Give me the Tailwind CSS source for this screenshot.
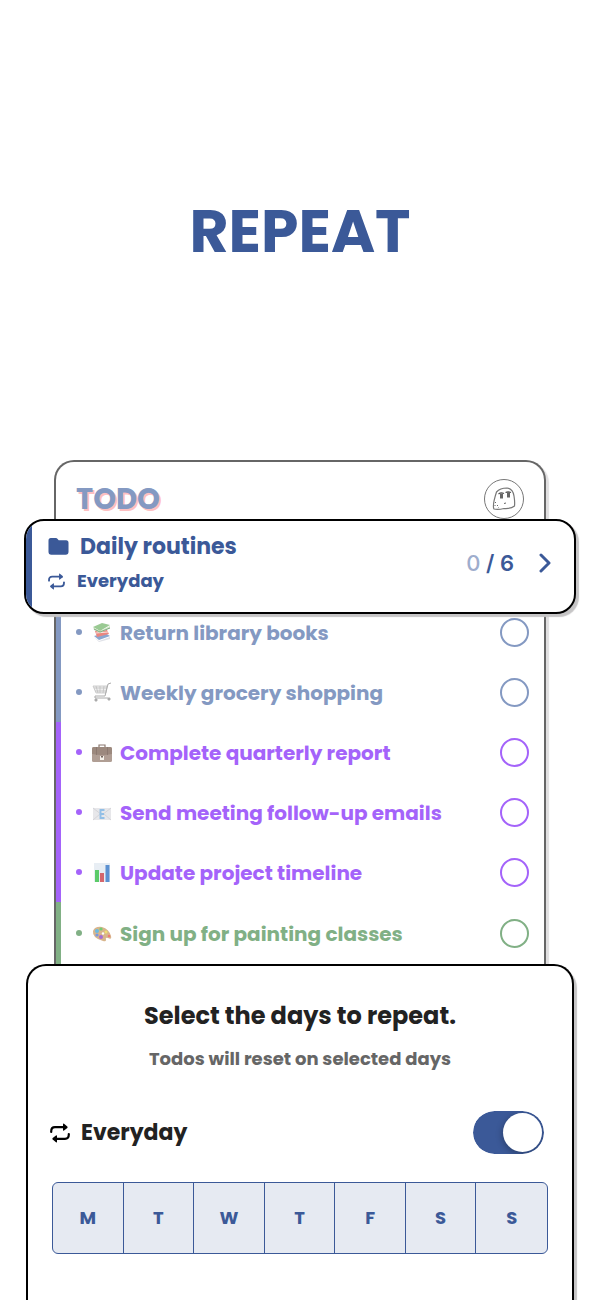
<!DOCTYPE html>
<html lang="en">
<head>
<meta charset="utf-8">
<meta name="viewport" content="width=device-width, initial-scale=1">
<title>Repeat</title>
<script src="https://cdn.jsdelivr.net/npm/@tailwindcss/browser@4"></script>
</head>
<body class="bg-white font-['Poppins','Inter',sans-serif] font-bold text-[#3b5998]">
<svg class="hidden" aria-hidden="true">
  <symbol id="repeat" viewBox="0 0 20 20">
    <g fill="none" stroke="currentColor" stroke-width="2.200" stroke-linecap="round" stroke-linejoin="round">
      <path d="M1.200 9V8.500Q1.200 4.200 5 4.200H15"/><path d="M18.800 11v.5Q18.800 15.800 15 15.800H5"/>
    </g>
    <path d="M13 1.300Q13 .2 14 .8L17.300 3.500Q18 4.200 17.300 4.900L14 7.600Q13 8.200 13 7.100Z" fill="currentColor"/>
    <path d="M7 12.900Q7 11.800 6 12.400L2.700 15.100Q2 15.800 2.700 16.500L6 19.200Q7 19.800 7 18.700Z" fill="currentColor"/>
  </symbol>
</svg>
<main class="flex min-h-screen flex-col overflow-hidden">
  <h1 class="mt-[201px] text-center text-[60px] leading-[60px]">REPEAT</h1>

  <section class="mx-[54px] mt-[199px] flex shrink-0 flex-col rounded-t-[20px] border-2 border-b-0 border-[#666] shadow-[3px_3px_1px_#e0dfe0]">
    <header class="flex h-[57px] shrink-0 items-center justify-between px-5 pt-4">
      <h2 class="text-[29px] leading-8 text-[#8499c2] [text-shadow:2px_2px_0_#fdbfc1]">TODO</h2>
      <button aria-label="Profile" class="size-10 shrink-0">
        <svg viewBox="0 0 40 40" class="size-10" fill="none" stroke="#777">
          <circle cx="20" cy="20" r="19.500"/>
          <path d="M12.500 13Q16 9 23 9Q29 10 30 17Q31 23 30.500 27Q27 30 20 29.500Q14 31 10 30Q8 27 12.500 13Z" stroke-width="1.200"/>
          <path d="M14.500 15Q17 13 20 14.500M21.500 13.500Q24 12.500 27 13.500" stroke="#555" stroke-width="1.300"/>
          <path d="M17.500 14.500v5M24.500 13.500v5" stroke="#666" stroke-width="3"/>
          <path d="M20 24.500l2-.5M12 23l-1 1M13 26l1 1M10.500 26l1 1M14 28l.5.5" stroke="#666"/>
        </svg>
      </button>
    </header>

    <article class="relative z-10 -mx-8 flex h-[95px] shrink-0 items-center justify-between overflow-hidden rounded-[20px] border-2 border-black bg-white pr-[22px] shadow-[3px_3px_1px_#c6c5c6]">
      <div class="flex h-full items-stretch">
        <span class="w-[6px] bg-[#3b5998]"></span>
        <div class="ml-4 flex flex-col gap-1 pt-[9px]">
          <h3 class="flex items-center gap-[11px] text-[22px] leading-[34px]">
            <svg viewBox="0 0 22 18" class="w-[21px]" fill="currentColor" aria-hidden="true"><path d="M3 0H8Q9.500 0 10.300 1.200L11.200 2.300H19Q21.500 2.300 21.500 5V14.500Q21.500 17.500 18.500 17.500H3.500Q.5 17.500 .5 14.500V3Q.5 0 3 0Z"/></svg>
            Daily routines
          </h3>
          <p class="flex items-center gap-3 text-lg leading-[26px]">
            <svg class="size-[17px]" aria-hidden="true"><use href="#repeat"/></svg>
            Everyday
          </p>
        </div>
      </div>
      <a href="#routines" aria-label="Open Daily routines, 0 of 6 done" class="mb-2 flex items-center gap-6 font-['Inter',sans-serif] text-[22px] leading-8 font-semibold">
        <span class="whitespace-pre"><span class="font-medium text-[#9eadcd]">0</span> / 6</span>
        <svg viewBox="0 0 14 20" class="h-5 w-[14px]" fill="none" stroke="currentColor" stroke-width="3" stroke-linecap="round" stroke-linejoin="round" aria-hidden="true"><path d="M3 2L11 10L3 18"/></svg>
      </a>
    </article>

    <ul class="-mt-3 flex flex-col text-[20px] leading-8">
      <li class="flex h-[60px] items-center border-l-[5px] border-[#8499c2] pr-[15px] pl-[15px] text-[#8499c2]">
        <span class="mr-[10px] size-[6px] rounded-full bg-current"></span>
        <svg viewBox="0 0 20 20" class="mr-2 size-5 opacity-80" aria-hidden="true"><path d="M2 14L13 11L18 14L7 18Z" fill="#6f91c5"/><path d="M2 15L7 19L18 15V17L7 20Z" fill="#d9dbe3"/><path d="M3 9L15 8L17 12L5 15Z" fill="#e76860"/><path d="M4 11L16 10" stroke="#f8ddd8"/><path d="M1 5L10 1L18 3L8 9Z" fill="#82bd79"/><path d="M1 5L8 9L18 4V6L8 11L2 8Z" fill="#cce1bf"/><path d="M2 7L8 10L18 6" stroke="#609a61" fill="none"/></svg>
        <label for="t1" class="flex-1 pt-[2px]">Return library books</label>
        <input id="t1" type="checkbox" class="size-[29px] appearance-none rounded-full border-2 border-[#8499c2]">
      </li>
      <li class="flex h-[60px] items-center border-l-[5px] border-[#8499c2] pr-[15px] pl-[15px] text-[#8499c2]">
        <span class="mr-[10px] size-[6px] rounded-full bg-current"></span>
        <svg viewBox="0 0 20 20" class="mr-2 size-5" fill="none" stroke="#bbb" aria-hidden="true"><path d="M1 4H15L14 11H4ZM4 4L6 11M8 4V11M12 4L11 11M2 6H15M3 9H14" fill="#eee" stroke-width=".7"/><path d="M19 1L16 2L13 14H3L3 16H16" stroke="#aaa"/><circle cx="4" cy="18" r="1.200" fill="#888"/><circle cx="17" cy="17" r="1.200" fill="#888"/></svg>
        <label for="t2" class="flex-1 pt-[2px]">Weekly grocery shopping</label>
        <input id="t2" type="checkbox" class="size-[29px] appearance-none rounded-full border-2 border-[#8499c2]">
      </li>
      <li class="flex h-[60px] items-center border-l-[5px] border-[#a463fa] pr-[15px] pl-[15px] text-[#a463fa]">
        <span class="mr-[10px] size-[6px] rounded-full bg-current"></span>
        <svg viewBox="0 0 20 20" class="mr-2 size-5" aria-hidden="true"><path d="M7 5V3H13V5" fill="none" stroke="#8b7970" stroke-width="1.200"/><rect x="0" y="5" width="20" height="15" rx="1.500" fill="#b09e94"/><path d="M0 12Q10 14 20 12V7Q20 5 18 5H2Q0 5 0 7Z" fill="#9c897e"/><path d="M4.500 5v8M15.500 5v8" stroke="#85736a" stroke-width=".7"/><path d="M8 14h4v4H8Z" fill="#f4f1e9"/><path d="M9 14h2v1.500H9Z" fill="#756760"/></svg>
        <label for="t3" class="flex-1 pt-[2px]">Complete quarterly report</label>
        <input id="t3" type="checkbox" class="size-[29px] appearance-none rounded-full border-2 border-[#a463fa]">
      </li>
      <li class="flex h-[60px] items-center border-l-[5px] border-[#a463fa] pr-[15px] pl-[15px] text-[#a463fa]">
        <span class="mr-[10px] size-[6px] rounded-full bg-current"></span>
        <svg viewBox="0 0 20 20" class="mr-2 size-5" aria-hidden="true"><path d="M1 6H19V18H1Z" fill="#e7e7ea"/><path d="M1 6L10 13L19 6M1 18L8 12M19 18L12 12" fill="none" stroke="#cfcfd4" stroke-width=".8"/><path d="M12.500 8H8.500V16H12.500M8.500 12H12" stroke="#93bfe6" stroke-width="1.900" fill="none"/></svg>
        <label for="t4" class="flex-1 pt-[2px]">Send meeting follow-up emails</label>
        <input id="t4" type="checkbox" class="size-[29px] appearance-none rounded-full border-2 border-[#a463fa]">
      </li>
      <li class="flex h-[60px] items-center border-l-[5px] border-[#a463fa] pr-[15px] pl-[15px] text-[#a463fa]">
        <span class="mr-[10px] size-[6px] rounded-full bg-current"></span>
        <svg viewBox="0 0 20 20" class="mr-2 size-5" aria-hidden="true"><path d="M2 1H18V20H2Z" fill="#e8eef4"/><path d="M3 8H7V20H3Z" fill="#5bcb69"/><path d="M8 11H12V20H8Z" fill="#d5666c"/><path d="M13.500 3H17.500V20H13.500Z" fill="#5c91d1"/></svg>
        <label for="t5" class="flex-1 pt-[2px]">Update project timeline</label>
        <input id="t5" type="checkbox" class="size-[29px] appearance-none rounded-full border-2 border-[#a463fa]">
      </li>
      <li class="flex h-[62px] items-center border-l-[5px] border-[#81b085] pr-[15px] pl-[15px] text-[#81b085]">
        <span class="mr-[10px] size-[6px] rounded-full bg-current"></span>
        <svg viewBox="0 0 20 20" class="mr-2 size-5" aria-hidden="true"><path d="M1 8Q3 3 10 4Q17 6 19 13Q20 17 16 15Q13 14 14 17Q14 19 11 18Q0 15 1 8Z" fill="#d8b58c"/><circle cx="5" cy="8" r="2" fill="#6abbe2"/><circle cx="9" cy="6" r="1.600" fill="#73cd75"/><circle cx="14" cy="9" r="1.500" fill="#efe170"/><circle cx="17" cy="13" r="1.300" fill="#ee7c74"/><circle cx="5" cy="12" r="1.600" fill="#7898e0"/><circle cx="9" cy="14" r="2" fill="#a46dd4"/><circle cx="11" cy="10.500" r="1.200" fill="#fff"/></svg>
        <label for="t6" class="flex-1 pt-[2px]">Sign up for painting classes</label>
        <input id="t6" type="checkbox" class="size-[29px] appearance-none rounded-full border-2 border-[#81b085]">
      </li>
    </ul>
  </section>

  <section class="relative z-20 mx-[26px] flex flex-1 flex-col rounded-t-[20px] border-2 border-b-0 border-black bg-white px-6 pt-8 shadow-[3px_4px_1px_#c6c5c6]">
    <h2 class="text-center text-2xl leading-9 text-[#222]">Select the days to repeat.</h2>
    <p class="mt-3 text-center text-lg leading-[26px] text-[#666]">Todos will reset on selected days</p>
    <div class="mt-[39px] flex items-center justify-between pr-1">
      <label for="everyday" class="flex items-center gap-[11px] text-[22px] leading-8 text-[#222]">
        <svg class="-ml-[2px] size-5 text-black" aria-hidden="true"><use href="#repeat"/></svg>
        Everyday
      </label>
      <span class="relative flex overflow-hidden rounded-full">
        <input id="everyday" type="checkbox" role="switch" checked class="h-[43px] w-[71px] appearance-none rounded-full bg-[#3b5998]">
        <span class="pointer-events-none absolute top-[2px] right-[2px] size-[39px] rounded-full bg-white shadow-[-1px_2px_6px_#0004]"></span>
      </span>
    </div>
    <div role="group" aria-label="Days to repeat" class="mt-7 grid h-[72px] grid-cols-7 divide-x divide-[#3b5998] overflow-hidden rounded-md border border-[#3b5998] bg-[#e6eaf2] text-lg">
      <button aria-pressed="true">M</button>
      <button aria-pressed="true">T</button>
      <button aria-pressed="true">W</button>
      <button aria-pressed="true">T</button>
      <button aria-pressed="true">F</button>
      <button aria-pressed="true">S</button>
      <button aria-pressed="true">S</button>
    </div>
  </section>
</main>
</body>
</html>
